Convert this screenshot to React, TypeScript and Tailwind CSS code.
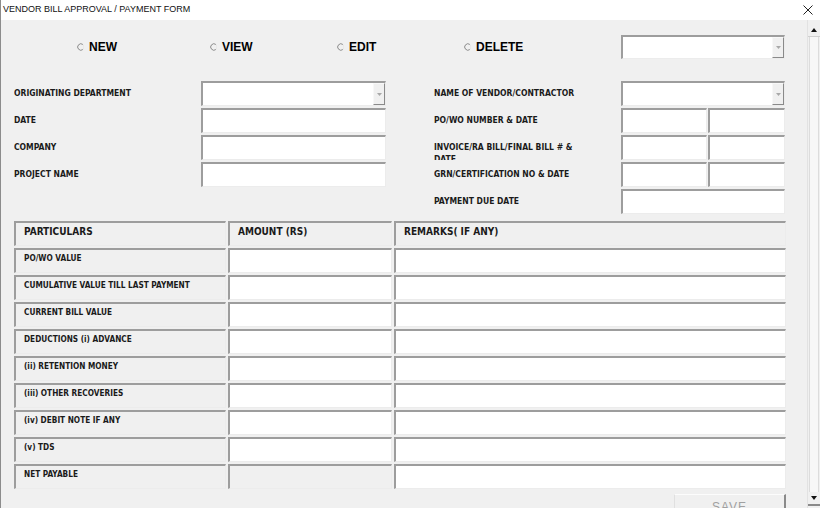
import React from 'react';

const sunken =
    'border-t-2 border-l-2 border-t-[#9d9d9d] border-l-[#9d9d9d] border-r border-b border-r-[#ececec] border-b-[#ececec]';

const labelFont = { fontFamily: '"DejaVu Sans Condensed", "DejaVu Sans", "Liberation Sans", sans-serif' };

function Radio({ label }: { label: string }) {
    return (
        <div className="flex items-center gap-[5px] pl-[2px]">
            <svg width="7" height="8" viewBox="0 0 7 8">
                <path d="M6 1.6 A3.2 3.2 0 1 0 6 6.4" fill="none" stroke="#8c8c8c" strokeWidth="1" />
                <path d="M6 1.6 A3.2 3.2 0 0 1 6 6.4" fill="none" stroke="#e2e2e2" strokeWidth="1" />
            </svg>
            <span className="text-[12px] font-bold text-black" style={{ fontFamily: '"Liberation Sans", Arial, sans-serif' }}>
                {label}
            </span>
        </div>
    );
}

function Combo({ className = '' }: { className?: string }) {
    return (
        <div className={`${sunken} bg-white flex justify-end ${className}`}>
            <div className="w-[12px] h-full bg-[#f0f0f0] border-t border-l border-t-[#f8f8f8] border-l-[#f8f8f8] border-r border-b border-r-[#8a8a8a] border-b-[#8a8a8a] flex items-center justify-center">
                <svg width="5" height="3" viewBox="0 0 5 3">
                    <path d="M0 0 L5 0 L2.5 3 Z" fill="#a8a8a8" />
                </svg>
            </div>
        </div>
    );
}

function Box({ className = '' }: { className?: string }) {
    return <div className={`${sunken} bg-white ${className}`} />;
}

function Label({ children, wrap }: { children: React.ReactNode; wrap?: boolean }) {
    return (
        <div className="h-[25px] overflow-hidden pt-[6px] leading-[12px] text-[8.5px] font-bold text-[#1a1a1a]" style={labelFont}>
            <div className={wrap ? 'w-[150px]' : ''}>{children}</div>
        </div>
    );
}

const rows = [
    'PO/WO VALUE',
    'CUMULATIVE VALUE TILL LAST PAYMENT',
    'CURRENT BILL VALUE',
    'DEDUCTIONS (i) ADVANCE',
    '(ii) RETENTION MONEY',
    '(iii) OTHER RECOVERIES',
    '(iv) DEBIT NOTE IF ANY',
    '(v) TDS',
    'NET PAYABLE',
];

export default function App() {
    return (
        <div className="w-[820px] h-[508px] overflow-hidden flex flex-col bg-[#f0f0f0] border-l border-[#8c8c8c]">
            {/* title bar */}
            <div className="h-[20px] bg-white flex items-center justify-between pl-[2px] pr-[7px]">
                <span className="text-[9px] text-[#111]" style={{ fontFamily: '"Liberation Sans", Arial, sans-serif' }}>
                    VENDOR BILL APPROVAL / PAYMENT FORM
                </span>
                <svg width="10" height="10" viewBox="0 0 10 10">
                    <path d="M0.5 0.5 L9.5 9.5 M9.5 0.5 L0.5 9.5" stroke="#222" strokeWidth="1" />
                </svg>
            </div>

            <div className="flex flex-1 min-h-0">
                <div className="flex-1 pl-[13px] pt-[15px] overflow-hidden">
                    {/* mode radios */}
                    <div className="h-[24px] grid grid-cols-[133px_127px_127px_159px_164px] items-center pl-[61px]">
                        <Radio label="NEW" />
                        <Radio label="VIEW" />
                        <Radio label="EDIT" />
                        <Radio label="DELETE" />
                        <Combo className="h-[24px]" />
                    </div>

                    {/* header fields */}
                    <div className="flex items-start mt-[22px]">
                        <div className="grid grid-cols-[187px_185px] gap-y-[2px] w-[372px]">
                            <Label>ORIGINATING DEPARTMENT</Label>
                            <Combo className="h-[25px]" />
                            <Label>DATE</Label>
                            <Box className="h-[25px]" />
                            <Label>COMPANY</Label>
                            <Box className="h-[25px]" />
                            <Label>PROJECT NAME</Label>
                            <Box className="h-[25px]" />
                        </div>
                        <div className="grid grid-cols-[187px_164px] gap-y-[2px] ml-[48px]">
                            <Label>NAME OF VENDOR/CONTRACTOR</Label>
                            <Combo className="h-[25px]" />
                            <Label>PO/WO NUMBER &amp; DATE</Label>
                            <div className="flex gap-[1px]">
                                <Box className="h-[25px] w-[86px]" />
                                <Box className="h-[25px] flex-1" />
                            </div>
                            <Label wrap>INVOICE/RA BILL/FINAL BILL # &amp; DATE</Label>
                            <div className="flex gap-[1px]">
                                <Box className="h-[25px] w-[86px]" />
                                <Box className="h-[25px] flex-1" />
                            </div>
                            <Label>GRN/CERTIFICATION NO &amp; DATE</Label>
                            <div className="flex gap-[1px]">
                                <Box className="h-[25px] w-[86px]" />
                                <Box className="h-[25px] flex-1" />
                            </div>
                            <Label>PAYMENT DUE DATE</Label>
                            <Box className="h-[25px]" />
                        </div>
                    </div>

                    {/* particulars table */}
                    <div className="grid grid-cols-[212px_164px_392px] gap-x-[2px] gap-y-[2px] mt-[7px] w-[772px]" style={labelFont}>
                        {['PARTICULARS', 'AMOUNT (RS)', 'REMARKS( IF ANY)'].map((h) => (
                            <div key={h} className={`${sunken} h-[25px] bg-[#f0f0f0] pl-[8px] pt-[2px] leading-[14px] text-[10px] font-bold text-[#1a1a1a]`}>
                                {h}
                            </div>
                        ))}
                        {rows.map((r, i) => (
                            <React.Fragment key={r}>
                                <div className={`${sunken} h-[25px] bg-[#f0f0f0] pl-[8px] pt-[2px] leading-[12px] text-[8.2px] font-bold text-[#1a1a1a]`}>
                                    {r}
                                </div>
                                <div className={`${sunken} h-[25px] ${i === rows.length - 1 ? 'bg-[#f0f0f0]' : 'bg-white'}`} />
                                <div className={`${sunken} h-[25px] bg-white`} />
                            </React.Fragment>
                        ))}
                    </div>

                    <div className="flex w-[772px] mt-[5px]">
                        <div className="ml-auto w-[112px] h-[24px] bg-[#f0f0f0] border-t border-l border-t-[#fcfcfc] border-l-[#e0e0e0] border-r-2 border-r-[#8a8a8a] flex items-center justify-center text-[12px] text-[#a0a0a0] tracking-[1px]" style={{ fontFamily: '"Liberation Sans", Arial, sans-serif' }}>
                            SAVE
                        </div>
                    </div>
                </div>

                {/* scrollbar */}
                <div className="w-[13px] flex flex-col border-l border-[#e2e2e2] bg-[#f0f0f0]">
                    <div className="h-[14px] mt-[3px] flex items-center justify-center border-b border-[#d0d0d0]">
                        <svg width="6" height="4" viewBox="0 0 6 4">
                            <path d="M0 4 L6 4 L3 0 Z" fill="#111" />
                        </svg>
                    </div>
                    <div className="flex-1 mx-[1px] border-x border-[#dcdcdc] bg-[#f7f7f7]" />
                    <div className="h-[14px] mb-[2px] flex items-center justify-center border-b-2 border-[#8a8a8a]">
                        <svg width="6" height="4" viewBox="0 0 6 4">
                            <path d="M0 0 L6 0 L3 4 Z" fill="#111" />
                        </svg>
                    </div>
                </div>
            </div>
        </div>
    );
}
